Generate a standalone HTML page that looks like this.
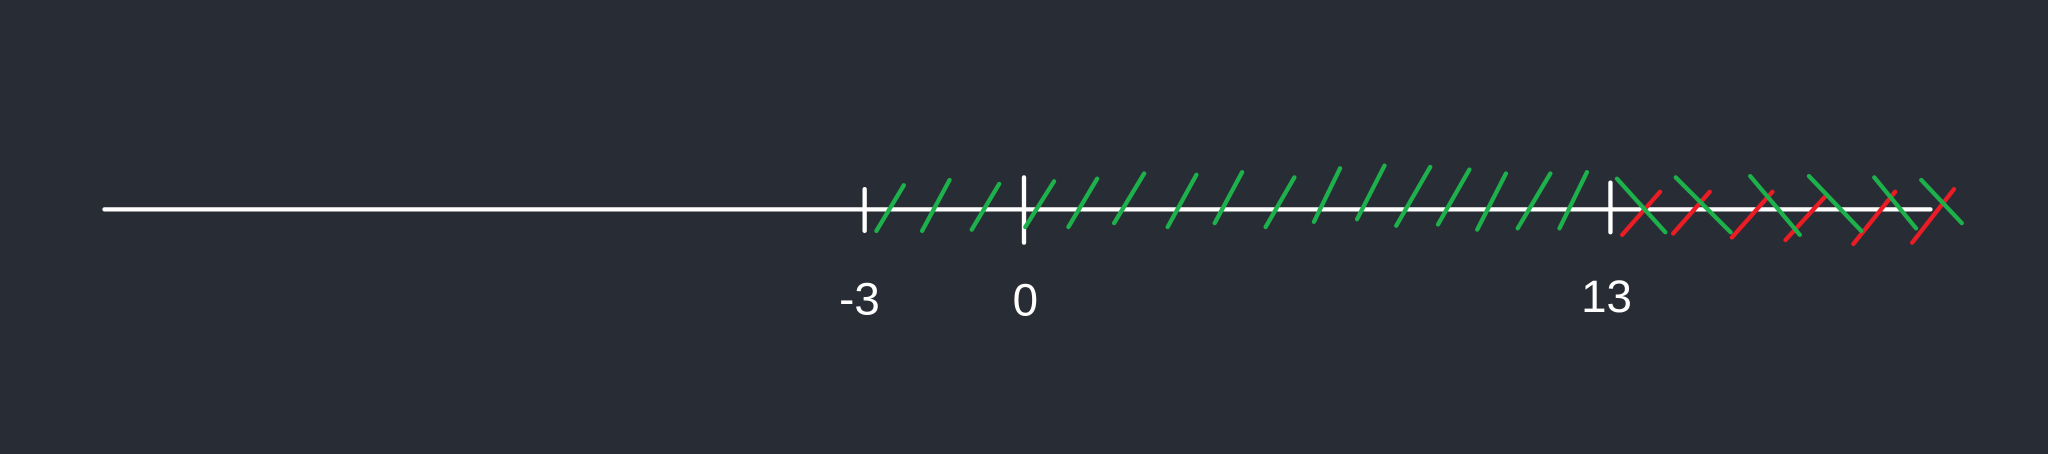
<!DOCTYPE html>
<html><head><meta charset="utf-8"><style>
html,body{margin:0;padding:0;background:#282c35;}
svg{display:block;}
</style></head><body>
<svg width="2048" height="454" viewBox="0 0 1568 348" preserveAspectRatio="none" xmlns="http://www.w3.org/2000/svg">
<rect width="1568" height="348" fill="#282c35"/>
<g stroke-linecap="round" fill="none">
<line x1="80" y1="160.5" x2="1478" y2="160.5" stroke="#fff" stroke-width="3.3"/>
<line x1="662" y1="145" x2="662" y2="177" stroke="#fff" stroke-width="3.3"/>
<line x1="784" y1="136" x2="784" y2="186" stroke="#fff" stroke-width="3.3"/>
<line x1="1233" y1="140" x2="1233" y2="178" stroke="#fff" stroke-width="3.3"/>
<g stroke="#1db14b" stroke-width="3.3">
<line x1="671" y1="177" x2="692" y2="142"/>
<line x1="706" y1="177" x2="727" y2="138"/>
<line x1="744" y1="176" x2="765" y2="141"/>
<line x1="785" y1="174" x2="807" y2="139"/>
<line x1="818" y1="174" x2="840" y2="137"/>
<line x1="853" y1="171" x2="876" y2="133"/>
<line x1="894" y1="174" x2="916" y2="134"/>
<line x1="930" y1="171" x2="951" y2="132"/>
<line x1="969" y1="174" x2="991" y2="136"/>
<line x1="1006" y1="170" x2="1026" y2="129"/>
<line x1="1039" y1="168" x2="1060" y2="127"/>
<line x1="1069" y1="173" x2="1095" y2="128"/>
<line x1="1101" y1="172" x2="1125" y2="130"/>
<line x1="1131" y1="176" x2="1153" y2="133"/>
<line x1="1162" y1="175" x2="1187" y2="133"/>
<line x1="1194" y1="175" x2="1215" y2="132"/>
</g>
<g stroke="#ec1c24" stroke-width="3.3">
<line x1="1242" y1="180" x2="1271" y2="147"/>
<line x1="1281" y1="179" x2="1309" y2="147"/>
<line x1="1326" y1="182" x2="1357" y2="147"/>
<line x1="1367" y1="184" x2="1398" y2="150"/>
<line x1="1419" y1="187" x2="1451" y2="147"/>
<line x1="1464" y1="186" x2="1496" y2="145"/>
</g>
<g stroke="#1db14b" stroke-width="3.3">
<line x1="1238" y1="137" x2="1275" y2="178"/>
<line x1="1283" y1="136" x2="1325" y2="178"/>
<line x1="1340" y1="135" x2="1378" y2="180"/>
<line x1="1385" y1="135" x2="1425" y2="177"/>
<line x1="1435" y1="136" x2="1467" y2="175"/>
<line x1="1471" y1="138" x2="1502" y2="171"/>
</g>
</g>
<g fill="#fff" font-family="Liberation Sans, sans-serif" font-size="35" text-anchor="middle">
<text x="658" y="241">-3</text>
<text x="785" y="242">0</text>
<text x="1230" y="239">13</text>
</g>
</svg>
</body></html>
